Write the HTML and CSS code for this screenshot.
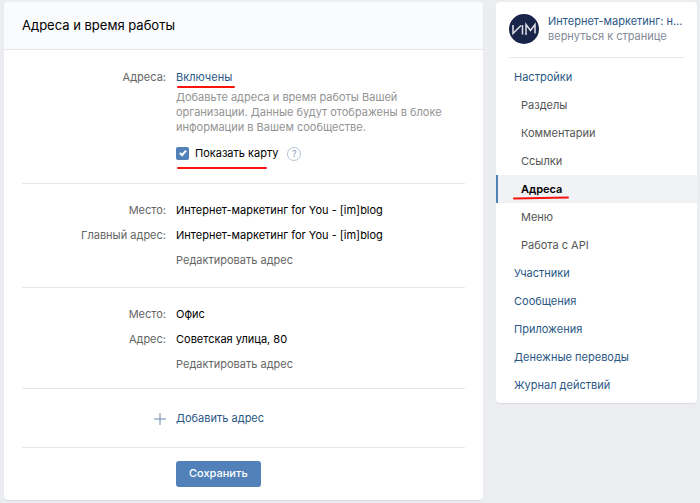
FILE: index.html
```html
<!DOCTYPE html>
<html lang="ru">
<head>
<meta charset="utf-8">
<title>Адреса и время работы</title>
<link rel="stylesheet" href="styles.css">
</head>
<body>
<div class="page">
  <main class="card">
    <h1 class="title">Адреса и время работы</h1>
    <form class="form">
      <section class="section section-status">
        <div class="row">
          <span class="label" id="status-label">Адреса:</span>
          <div class="value">
            <button type="button" class="link marked mark-status" aria-labelledby="status-label status" id="status">Включены</button>
            <p class="hint">Добавьте адреса и время работы Вашей организации. Данные будут отображены в блоке информации в Вашем сообществе.</p>
            <div class="option marked mark-map">
              <input type="checkbox" class="check" id="map" checked>
              <label for="map">Показать карту</label>
              <button type="button" class="help" aria-label="Справка">?</button>
            </div>
          </div>
        </div>
      </section>
      <section class="section">
        <div class="row"><span class="label">Место:</span><span class="value">Интернет-маркетинг for You - [im]blog</span></div>
        <div class="row"><span class="label">Главный адрес:</span><span class="value">Интернет-маркетинг for You - [im]blog</span></div>
        <div class="row"><span class="label"></span><a class="edit" href="#">Редактировать адрес</a></div>
      </section>
      <section class="section section-short">
        <div class="row"><span class="label">Место:</span><span class="value">Офис</span></div>
        <div class="row"><span class="label">Адрес:</span><span class="value">Советская улица, 80</span></div>
        <div class="row"><span class="label"></span><a class="edit" href="#">Редактировать адрес</a></div>
      </section>
      <section class="section section-add">
        <button type="button" class="link add">
          <svg class="plus" viewBox="0 0 12 12" aria-hidden="true"><path d="M6 0v12M0 6h12"/></svg>
          <span>Добавить адрес</span>
        </button>
      </section>
      <div class="footer"><button type="submit" class="save">Сохранить</button></div>
    </form>
  </main>
  <aside class="card side">
    <a class="group" href="#">
      <svg class="avatar" viewBox="0 0 30 30" aria-hidden="true">
        <circle cx="15" cy="15" r="15"/>
        <path d="M4 11v8.500L12 11.500M13.500 11v9.500M17 21V10.500l4.500 6 4.500-6v9"/>
      </svg>
      <span class="group-text">
        <span class="group-name">Интернет-маркетинг: н...</span>
        <span class="group-back">вернуться к странице</span>
      </span>
    </a>
    <nav class="menu">
      <a href="#">Настройки</a>
      <a class="sub" href="#">Разделы</a>
      <a class="sub" href="#">Комментарии</a>
      <a class="sub" href="#">Ссылки</a>
      <a class="sub current" href="#" aria-current="page"><span class="marked mark-menu">Адреса</span></a>
      <a class="sub" href="#">Меню</a>
      <a class="sub" href="#">Работа с API</a>
      <a href="#">Участники</a>
      <a href="#">Сообщения</a>
      <a href="#">Приложения</a>
      <a href="#">Денежные переводы</a>
      <a href="#">Журнал действий</a>
    </nav>
  </aside>
</div>
</body>
</html>
```
FILE: styles.css
```css
* { box-sizing: border-box; }

body {
  margin: 0;
  background: #ebedf0;
  color: #000;
  font: 11px/15px Inter, "Liberation Sans", sans-serif;
}

button { font: inherit; cursor: pointer; }
a { text-decoration: none; }

.page {
  display: grid;
  grid-template-columns: minmax(0, 1fr) 201px;
  gap: 13px;
  align-items: start;
  padding: 2px 3px 2px 4px;
}

.card {
  background: #fff;
  border-radius: 4px;
  box-shadow: 0 1px 1px #d8dade;
}

.title {
  margin: 0;
  padding: 14px 18px;
  border-bottom: 1px solid #e7e8ec;
  border-radius: 4px 4px 0 0;
  background: #fafbfc;
  font-size: 13px;
  line-height: 19px;
  font-weight: 400;
}

.form { padding: 0 18px 13px; }

.section {
  display: grid;
  gap: 10px;
  padding: 19px 0;
  border-bottom: 1px solid #e7e8ec;
}

.section-status { padding: 20px 0 22px; }

.section-short { padding-bottom: 16px; }

.section-add { padding: 22px 0 21px 132px; }

.row {
  display: grid;
  grid-template-columns: 144px minmax(0, 1fr);
  gap: 10px;
}

.label { color: #656565; text-align: right; }

.link {
  padding: 0;
  border: 0;
  background: none;
  color: #2a5885;
}

.hint {
  max-width: 272px;
  margin: 5px 0 11px;
  color: #939393;
}

.option {
  display: flex;
  align-items: center;
  gap: 6px;
}

.check {
  appearance: none;
  width: 13px;
  height: 13px;
  margin: 0;
  border-radius: 2px;
  background: #5181b8;
  position: relative;
}

.check:checked::after {
  content: "";
  position: absolute;
  left: 5px;
  top: 2px;
  width: 4px;
  height: 7px;
  border: solid #fff;
  border-width: 0 2px 2px 0;
  box-sizing: border-box;
  transform: rotate(42deg);
}

.help {
  width: 14px;
  height: 14px;
  margin-left: 3px;
  padding: 0;
  border: 1px solid #b9c4d6;
  border-radius: 50%;
  background: #fff;
  color: #8c9bb3;
  font-size: 9px;
  line-height: 12px;
}

.edit { color: #656565; }

.add {
  display: flex;
  align-items: center;
  gap: 10px;
}

.plus {
  width: 12px;
  height: 12px;
  fill: none;
  stroke: #6888ad;
}

.footer { padding: 13px 0 0 154px; }

.save {
  padding: 5px 13px 6px;
  border: 0;
  border-radius: 3px;
  background: #5181b8;
  color: #fff;
  font-weight: 500;
}

/* Red accent lines under highlighted items */
.marked { position: relative; }

.marked::before {
  content: "";
  position: absolute;
  left: 1px;
  height: 2px;
  border-radius: 1px;
  background: #f9130c;
}

.mark-status::before { width: 58px; bottom: -3px; }
.mark-map::before { width: 90px; bottom: -8px; }
.mark-menu::before { left: -8px; width: 56px; bottom: -3px; transform: rotate(-1deg); }

.side { padding: 0 0 4px; }

.group {
  display: flex;
  align-items: center;
  gap: 9px;
  margin: 0 13px;
  padding: 12px 0 13px;
  border-bottom: 1px solid #e7e8ec;
}

.avatar { flex: none; width: 30px; height: 30px; }
.avatar circle { fill: #192449; }
.avatar path { fill: none; stroke: #dfe1e7; stroke-width: 1.5; }

.group-text { display: grid; white-space: nowrap; }
.group-name { color: #2a5885; }
.group-back { color: #828a99; }

.menu { display: grid; padding-top: 5px; }

.menu a {
  padding: 7px 18px 6px;
  color: #2a5885;
}

.menu .sub { padding-left: 25px; color: #555; }

.menu .current {
  padding-left: 23px;
  border-left: 2px solid #5181b8;
  background: #f0f2f5;
  color: #000;
  font-weight: 600;
}
```
